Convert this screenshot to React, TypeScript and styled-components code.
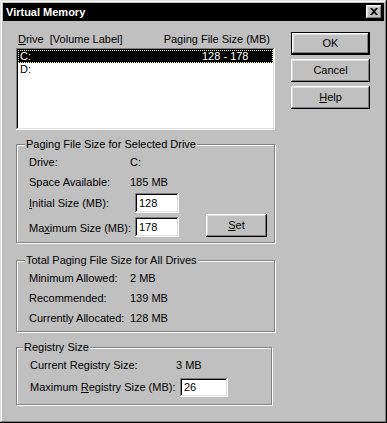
import styled, { createGlobalStyle } from 'styled-components'

const GlobalStyle = createGlobalStyle`
   html, body {
      margin: 0;
      padding: 0;
      background: #c0c0c0;
   }
   body {
      font-family: "Liberation Sans", Arial, sans-serif;
      font-size: 11px;
      color: #000;
   }
   u {
      text-decoration-thickness: 1px;
      text-underline-offset: 1px;
   }
`

const raised = `
   box-shadow: inset -1px -1px #000, inset 1px 1px #fff, inset -2px -2px #808080, inset 2px 2px #dfdfdf;
`
const sunken = `
   box-shadow: inset -1px -1px #fff, inset 1px 1px #808080, inset -2px -2px #dfdfdf, inset 2px 2px #000;
`

const Window = styled.div`
   width: 387px;
   height: 423px;
   box-sizing: border-box;
   padding: 3px;
   background: #c0c0c0;
   box-shadow: inset -1px -1px #000, inset 1px 1px #dfdfdf, inset -2px -2px #808080, inset 2px 2px #fff;
   display: flex;
   flex-direction: column;
`

const TitleBar = styled.div`
   height: 18px;
   flex: none;
   display: flex;
   align-items: center;
   padding: 0 2px 0 3px;
   background: #000;
   color: #fff;
   font-weight: bold;
   font-size: 11px;
`

const CloseButton = styled.div`
   margin-left: auto;
   width: 16px;
   height: 14px;
   background: #c0c0c0;
   display: flex;
   align-items: center;
   justify-content: center;
   ${raised}
   svg {
      margin-top: -1px;
   }
`

const Body = styled.div`
   display: flex;
   align-items: flex-start;
   padding: 11px 0 0 13px;
`

const LeftColumn = styled.div`
   width: 259px;
   flex: none;
   padding-top: 1px;
`

const ButtonColumn = styled.div`
   margin-left: 16px;
   display: flex;
   flex-direction: column;
   gap: 4px;
`

const Button = styled.div<{ $w?: number; $default?: boolean }>`
   width: ${(p) => p.$w ?? 79}px;
   height: 23px;
   box-sizing: border-box;
   display: flex;
   align-items: center;
   justify-content: center;
   background: #c0c0c0;
   ${(p) =>
      p.$default
         ? `box-shadow: inset 0 0 0 1px #000, inset -2px -2px #000, inset 2px 2px #fff, inset -3px -3px #808080, inset 3px 3px #dfdfdf;`
         : raised}
   padding-bottom: 1px;
`

const ListHeader = styled.div`
   height: 13px;
   line-height: 13px;
   display: flex;
   justify-content: space-between;
   padding: 0 5px 0 2px;
`

const ListBox = styled.div`
   margin-top: 2px;
   height: 82px;
   box-sizing: border-box;
   padding: 2px;
   background: #fff;
   ${sunken}
`

const ListRow = styled.div<{ $selected?: boolean }>`
   height: 13px;
   line-height: 13px;
   display: flex;
   padding-left: 2px;
   background: ${(p) => (p.$selected ? '#000' : 'transparent')};
   color: ${(p) => (p.$selected ? '#fff' : '#000')};
   outline: ${(p) => (p.$selected ? '1px dotted #ffffc0' : 'none')};
   outline-offset: -1px;
`

const DriveCell = styled.span`
   width: 182px;
   flex: none;
`

const Group = styled.fieldset<{ $w?: number; $mt: number; $pl?: number; $pb: number }>`
   width: ${(p) => p.$w ?? 259}px;
   box-sizing: border-box;
   margin: ${(p) => p.$mt}px 0 0;
   padding: 1px 0 ${(p) => p.$pb}px ${(p) => p.$pl ?? 12}px;
   min-width: 0;
   border: 1px solid #808080;
   box-shadow: inset 1px 1px #fff, 1px 1px #fff;
`

const Legend = styled.legend<{ $ml?: number }>`
   margin-left: ${(p) => p.$ml ?? -4}px;
   padding: 0 1px;
   line-height: 13px;
   background: #c0c0c0;
`

const Field = styled.div<{ $h?: number; $end?: boolean }>`
   height: ${(p) => p.$h ?? 20}px;
   display: flex;
   align-items: ${(p) => (p.$end ? 'flex-end' : 'center')};
   white-space: nowrap;
`

const Label = styled.span<{ $w: number; $pb?: number }>`
   width: ${(p) => p.$w}px;
   flex: none;
   padding-bottom: ${(p) => p.$pb ?? 0}px;
`

const TextBox = styled.div<{ $w: number; $h?: number }>`
   width: ${(p) => p.$w}px;
   height: ${(p) => p.$h ?? 20}px;
   box-sizing: border-box;
   flex: none;
   padding: 0 3px 0 4px;
   display: flex;
   align-items: center;
   background: #fff;
   ${sunken}
`

const SetButton = styled(Button)`
   margin-left: 27px;
`

const CloseGlyph = () => (
   <svg width="8" height="7" viewBox="0 0 8 7">
      <path d="M0 0h2l2 2 2-2h2L5 3.5 8 7H6L4 5 2 7H0l3-3.5z" fill="#000" />
   </svg>
)

export default function App() {
   return (
      <>
         <GlobalStyle />
         <Window>
            <TitleBar>
               Virtual Memory
               <CloseButton>
                  <CloseGlyph />
               </CloseButton>
            </TitleBar>
            <Body>
               <LeftColumn>
                  <ListHeader>
                     <span>
                        <u>D</u>rive&nbsp; [Volume Label]
                     </span>
                     <span>Paging File Size (MB)</span>
                  </ListHeader>
                  <ListBox>
                     <ListRow $selected>
                        <DriveCell>C:</DriveCell>
                        <span>128 - 178</span>
                     </ListRow>
                     <ListRow>
                        <DriveCell>D:</DriveCell>
                     </ListRow>
                  </ListBox>

                  <Group $mt={8} $pb={5}>
                     <Legend>Paging File Size for Selected Drive</Legend>
                     <Field>
                        <Label $w={101}>Drive:</Label>
                        <span>C:</span>
                     </Field>
                     <Field>
                        <Label $w={101}>Space Available:</Label>
                        <span>185 MB</span>
                     </Field>
                     <Field $h={22}>
                        <Label $w={106}>
                           <u>I</u>nitial Size (MB):
                        </Label>
                        <TextBox $w={44}>128</TextBox>
                     </Field>
                     <Field $h={23} $end>
                        <Label $w={106} $pb={3}>
                           Ma<u>x</u>imum Size (MB):
                        </Label>
                        <TextBox $w={44}>178</TextBox>
                        <SetButton $w={61}>
                           <span>
                              <u>S</u>et
                           </span>
                        </SetButton>
                     </Field>
                  </Group>

                  <Group $mt={11} $pb={4}>
                     <Legend>Total Paging File Size for All Drives</Legend>
                     <Field>
                        <Label $w={101}>Minimum Allowed:</Label>
                        <span>2 MB</span>
                     </Field>
                     <Field>
                        <Label $w={101}>Recommended:</Label>
                        <span>139 MB</span>
                     </Field>
                     <Field $h={19}>
                        <Label $w={101}>Currently Allocated:</Label>
                        <span>128 MB</span>
                     </Field>
                  </Group>

                  <Group $mt={9} $w={256} $pl={13} $pb={5}>
                     <Legend $ml={-7}>Registry Size</Legend>
                     <Field>
                        <Label $w={146}>Current Registry Size:</Label>
                        <span>3 MB</span>
                     </Field>
                     <Field $h={24}>
                        <Label $w={150}>
                           Maximum <u>R</u>egistry Size (MB):
                        </Label>
                        <TextBox $w={48} $h={19}>
                           26
                        </TextBox>
                     </Field>
                  </Group>
               </LeftColumn>

               <ButtonColumn>
                  <Button $default>OK</Button>
                  <Button>Cancel</Button>
                  <Button>
                     <span>
                        <u>H</u>elp
                     </span>
                  </Button>
               </ButtonColumn>
            </Body>
         </Window>
      </>
   )
}
